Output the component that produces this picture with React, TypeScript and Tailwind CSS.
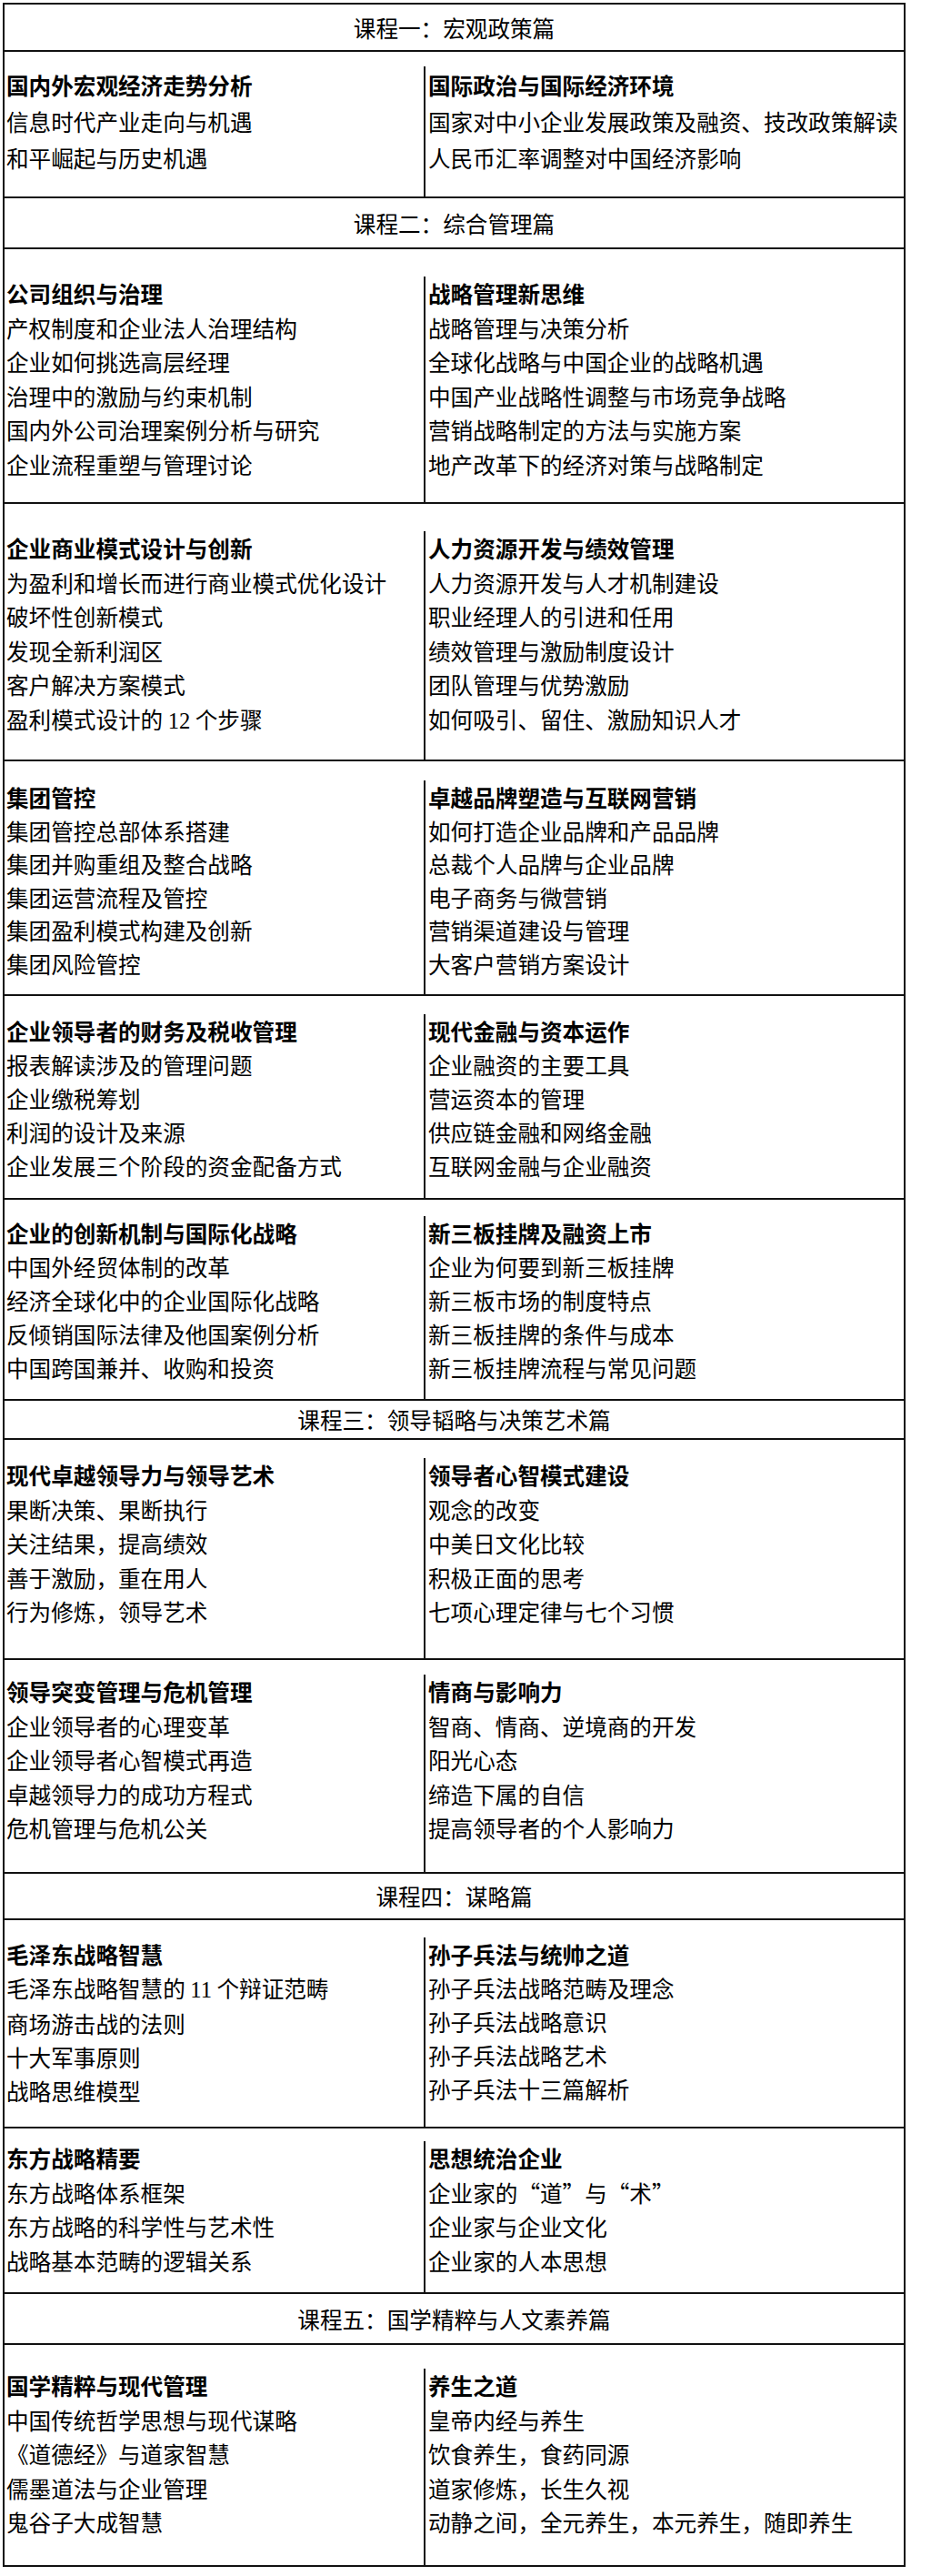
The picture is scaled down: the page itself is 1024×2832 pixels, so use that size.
import React from 'react';

type Row = {
  h: string;
  pt: string;
  lh?: string;
  left: string[];
  right: string[];
};

type Section = {
  title: string;
  h: string;
  rows: Row[];
};

const sections: Section[] = [
  {
    title: '课程一：宏观政策篇',
    h: 'h-[52px]',
    rows: [
      {
        h: 'h-[161px]',
        pt: 'pt-[16px]',
        lh: 'leading-[40px]',
        left: ['国内外宏观经济走势分析', '信息时代产业走向与机遇', '和平崛起与历史机遇'],
        right: ['国际政治与国际经济环境', '国家对中小企业发展政策及融资、技改政策解读', '人民币汇率调整对中国经济影响'],
      },
    ],
  },
  {
    title: '课程二：综合管理篇',
    h: 'h-[56px]',
    rows: [
      {
        h: 'h-[280px]',
        pt: 'pt-[30px]',
        left: ['公司组织与治理', '产权制度和企业法人治理结构', '企业如何挑选高层经理', '治理中的激励与约束机制', '国内外公司治理案例分析与研究', '企业流程重塑与管理讨论'],
        right: ['战略管理新思维', '战略管理与决策分析', '全球化战略与中国企业的战略机遇', '中国产业战略性调整与市场竞争战略', '营销战略制定的方法与实施方案', '地产改革下的经济对策与战略制定'],
      },
      {
        h: 'h-[283px]',
        pt: 'pt-[30px]',
        left: ['企业商业模式设计与创新', '为盈利和增长而进行商业模式优化设计', '破坏性创新模式', '发现全新利润区', '客户解决方案模式', '盈利模式设计的 12 个步骤'],
        right: ['人力资源开发与绩效管理', '人力资源开发与人才机制建设', '职业经理人的引进和任用', '绩效管理与激励制度设计', '团队管理与优势激励', '如何吸引、留住、激励知识人才'],
      },
      {
        h: 'h-[258px]',
        pt: 'pt-[21px]',
        lh: 'leading-[36.5px]',
        left: ['集团管控', '集团管控总部体系搭建', '集团并购重组及整合战略', '集团运营流程及管控', '集团盈利模式构建及创新', '集团风险管控'],
        right: ['卓越品牌塑造与互联网营销', '如何打造企业品牌和产品品牌', '总裁个人品牌与企业品牌', '电子商务与微营销', '营销渠道建设与管理', '大客户营销方案设计'],
      },
      {
        h: 'h-[224px]',
        pt: 'pt-[20px]',
        lh: 'leading-[37px]',
        left: ['企业领导者的财务及税收管理', '报表解读涉及的管理问题', '企业缴税筹划', '利润的设计及来源', '企业发展三个阶段的资金配备方式'],
        right: ['现代金融与资本运作', '企业融资的主要工具', '营运资本的管理', '供应链金融和网络金融', '互联网金融与企业融资'],
      },
      {
        h: 'h-[221px]',
        pt: 'pt-[18px]',
        lh: 'leading-[37px]',
        left: ['企业的创新机制与国际化战略', '中国外经贸体制的改革', '经济全球化中的企业国际化战略', '反倾销国际法律及他国案例分析', '中国跨国兼并、收购和投资'],
        right: ['新三板挂牌及融资上市', '企业为何要到新三板挂牌', '新三板市场的制度特点', '新三板挂牌的条件与成本', '新三板挂牌流程与常见问题'],
      },
    ],
  },
  {
    title: '课程三：领导韬略与决策艺术篇',
    h: 'h-[43px]',
    rows: [
      {
        h: 'h-[242px]',
        pt: 'pt-[20px]',
        left: ['现代卓越领导力与领导艺术', '果断决策、果断执行', '关注结果，提高绩效', '善于激励，重在用人', '行为修炼，领导艺术'],
        right: ['领导者心智模式建设', '观念的改变', '中美日文化比较', '积极正面的思考', '七项心理定律与七个习惯'],
      },
      {
        h: 'h-[235px]',
        pt: 'pt-[16px]',
        left: ['领导突变管理与危机管理', '企业领导者的心理变革', '企业领导者心智模式再造', '卓越领导力的成功方程式', '危机管理与危机公关'],
        right: ['情商与影响力', '智商、情商、逆境商的开发', '阳光心态', '缔造下属的自信', '提高领导者的个人影响力'],
      },
    ],
  },
  {
    title: '课程四：谋略篇',
    h: 'h-[51px]',
    rows: [
      {
        h: 'h-[229px]',
        pt: 'pt-[19px]',
        lh: 'leading-[37px]',
        left: ['毛泽东战略智慧', '毛泽东战略智慧的 11 个辩证范畴', '商场游击战的法则', '十大军事原则', '战略思维模型'],
        right: ['孙子兵法与统帅之道', '孙子兵法战略范畴及理念', '孙子兵法战略意识', '孙子兵法战略艺术', '孙子兵法十三篇解析'],
      },
      {
        h: 'h-[182px]',
        pt: 'pt-[14px]',
        left: ['东方战略精要', '东方战略体系框架', '东方战略的科学性与艺术性', '战略基本范畴的逻辑关系'],
        right: ['思想统治企业', '企业家的“道”与“术”', '企业家与企业文化', '企业家的人本思想'],
      },
    ],
  },
  {
    title: '课程五：国学精粹与人文素养篇',
    h: 'h-[56px]',
    rows: [
      {
        h: 'h-[244px]',
        pt: 'pt-[26px]',
        left: ['国学精粹与现代管理', '中国传统哲学思想与现代谋略', '《道德经》与道家智慧', '儒墨道法与企业管理', '鬼谷子大成智慧'],
        right: ['养生之道', '皇帝内经与养生', '饮食养生，食药同源', '道家修炼，长生久视', '动静之间，全元养生，本元养生，随即养生'],
      },
    ],
  },
];

// digits in the source doc are set in a Times-like face
function Line({ text, bold }: { text: string; bold?: boolean }) {
  const parts = text.split(/(\d+)/);
  return (
    <div className={bold ? 'font-bold' : 'font-normal'}>
      {parts.map((p, i) =>
        /^\d+$/.test(p) ? (
          <span key={i} className="font-['Liberation_Serif']">
            {p}
          </span>
        ) : (
          <span key={i}>{p}</span>
        ),
      )}
    </div>
  );
}

function Cell({ lines, className }: { lines: string[]; className: string }) {
  return (
    <div className={className}>
      {lines.map((l, i) => (
        <Line key={i} text={l} bold={i === 0} />
      ))}
    </div>
  );
}

export default function App() {
  return (
    <div className="min-h-[2832px] bg-white pt-[3px] pl-[3px] font-['Noto_Sans_CJK_SC',sans-serif] text-[24.6px] text-black">
      <div className="w-[993px] border-x-2 border-t-2 border-[#111]">
        {sections.map((s) => (
          <div key={s.title}>
            <div className={`${s.h} flex items-center justify-center border-b-2 border-[#111] leading-none`}>
              {s.title}
            </div>
            {s.rows.map((r, i) => (
              <div
                key={i}
                className={`${r.h} ${r.pt} ${r.lh ?? 'leading-[37.5px]'} flex border-b-2 border-[#111] whitespace-nowrap`}
              >
                <Cell lines={r.left} className="w-[463px] shrink-0 border-r-2 border-[#111] pl-[2px]" />
                <Cell lines={r.right} className="flex-1 pl-[3px]" />
              </div>
            ))}
          </div>
        ))}
      </div>
    </div>
  );
}
